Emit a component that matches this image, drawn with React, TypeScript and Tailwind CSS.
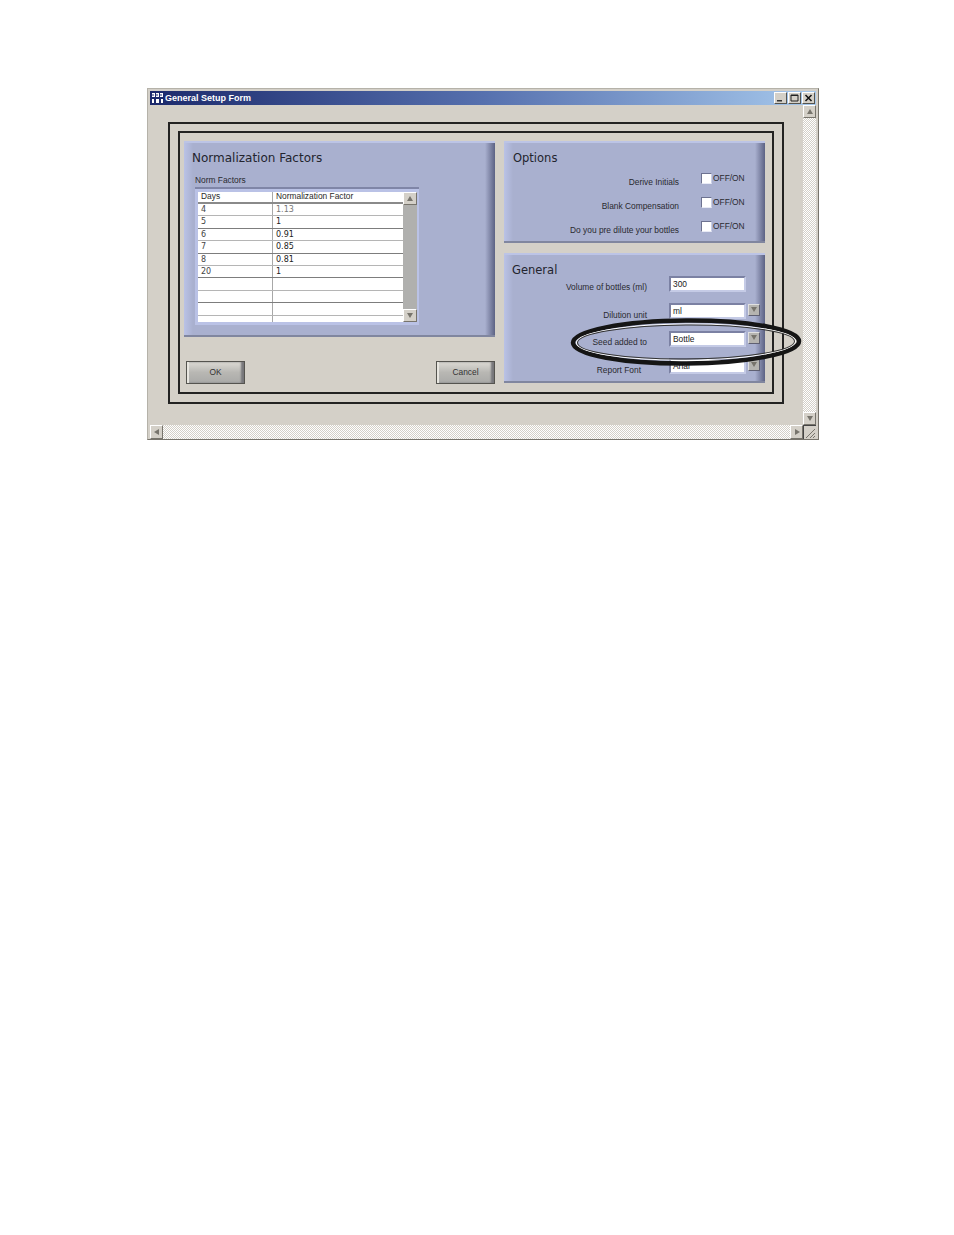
import React from "react";

const UI = "font-['Liberation_Sans',sans-serif]";

const Tri = ({ dir, className = "" }: { dir: "up" | "down" | "left" | "right"; className?: string }) => {
  const pts = { up: "4,1 7,6 1,6", down: "1,1 7,1 4,6", left: "6,1 6,7 1,4", right: "2,1 2,7 7,4" }[dir];
  return (
    <svg width="8" height="8" viewBox="0 0 8 8" className={className}>
      <polygon points={pts} fill="#77746c" />
    </svg>
  );
};

const WinBtn = ({ dir, className = "" }: { dir: "up" | "down" | "left" | "right"; className?: string }) => (
  <div className={`flex items-center justify-center bg-[#d4d0c8] border border-t-white border-l-white border-r-[#77746c] border-b-[#77746c] ${className}`}>
    <Tri dir={dir} />
  </div>
);

const Panel = ({ className = "", children }: { className?: string; children: React.ReactNode }) => (
  <div
    className={`border-t-2 border-b-2 border-t-[#bcc4e6] border-b-[#80869f] bg-[#a9b0cf] bg-[linear-gradient(to_right,#bac2e6_0,#a9b0cf_9px,#a9b0cf_calc(100%-10px),#5c6284_100%)] ${className}`}
  >
    {children}
  </div>
);

const rows = [
  ["4", "1.13"],
  ["5", "1"],
  ["6", "0.91"],
  ["7", "0.85"],
  ["8", "0.81"],
  ["20", "1"],
  ["", ""],
  ["", ""],
  ["", ""],
  ["", ""],
];

const Check = ({ label }: { label: string }) => (
  <div className="flex items-start h-[24px] pr-[20px] justify-end">
    <span className={`pt-[4px] mr-[22px] text-[8.4px] leading-[12px] text-[#2a2a30] ${UI}`}>{label}</span>
    <span className="w-[11px] h-[11px] mt-[1px] bg-white border border-[#6d7290] border-r-[#c9cee6] border-b-[#e8eaf5]" />
    <span className={`ml-[1px] mt-[1px] w-[32px] text-[8.4px] leading-[11px] text-[#2a2a30] ${UI}`}>OFF/ON</span>
  </div>
);

const Field = ({ label, value, arrow, pad = 22, h = 28, top = 5 }: { label: string; value: string; arrow?: boolean; pad?: number; h?: number; top?: number }) => (
  <div className="flex items-start justify-end" style={{ height: h }}>
    <span className={`text-[8.4px] leading-[12px] text-[#2a2a30] ${UI}`} style={{ marginRight: pad, paddingTop: top }}>
      {label}
    </span>
    <div className={`w-[77px] h-[16px] bg-white border-2 border-t-[#7b81a3] border-l-[#7b81a3] border-r-[#c5cbe6] border-b-[#c5cbe6] pl-[2px] text-[8.4px] leading-[12px] text-[#222] ${UI}`}>
      {value}
    </div>
    <div className="ml-[1px] mr-[5px] w-[13px] h-[13px] flex items-center justify-center">
      {arrow && (
        <div className="w-[12px] h-[12px] flex items-center justify-center bg-[#b5b4b0] border border-[#5f6072] border-t-[#e0e0e0] border-l-[#e0e0e0]">
          <Tri dir="down" />
        </div>
      )}
    </div>
  </div>
);

const Btn = ({ label }: { label: string }) => (
  <div className={`w-[59px] h-[23px] flex items-center justify-center border border-[#55544f] bg-[linear-gradient(to_bottom,#dcdad4,#b8b7b3_50%,#aaaaa8)] shadow-[inset_2px_0_0_#e8e6e0,inset_-3px_0_2px_#77767a] text-[8.4px] text-[#333] ${UI}`}>
    {label}
  </div>
);

export default function App() {
  return (
    <div className="relative w-[954px] h-[1235px] bg-white overflow-hidden font-['DejaVu_Sans',sans-serif]">
      <div className="pt-[88px] pl-[147px]">
        <div className="w-[672px] h-[352px] flex flex-col bg-[#d4d0c8] border border-[#b5b2a9] border-r-[#77746c] border-b-[#77746c] px-[2px] pt-[2px]">
          {/* title bar */}
          <div className="h-[14px] flex items-center justify-between bg-[linear-gradient(to_right,#1c2a6c,#5670ae_50%,#a6c8ec)] pl-[1px] pr-[1px]">
            <div className="flex items-center gap-[1px]">
              <svg width="13" height="12" viewBox="0 0 13 12">
                <rect width="13" height="12" fill="#1c2a6c" />
                <path d="M1 1h3v4H1zM5 1h3v4H5zM9 1h3v4H9zM1 7h2v4H1zM5 7h3v4H5zM10 7h2v4h-2z" fill="#fff" />
                <path d="M2 2v2M6 2v2M10 2v2" stroke="#1c2a6c" />
              </svg>
              <span className={`text-[9px] leading-[14px] font-bold text-white ${UI}`}>General Setup Form</span>
            </div>
            <div className="flex gap-[1px]">
              {["min", "max", "close"].map((k) => (
                <div key={k} className="w-[13px] h-[12px] flex items-center justify-center bg-[#d4d0c8] border border-t-white border-l-white border-r-[#55544f] border-b-[#55544f]">
                  <svg width="9" height="8" viewBox="0 0 9 8">
                    {k === "min" && <rect x="1" y="6" width="5" height="1.5" fill="#333" />}
                    {k === "max" && <path d="M1 1h7v6H1zM1 1.5h7" fill="none" stroke="#222" />}
                    {k === "close" && <path d="M1.5 1l6 6M7.5 1l-6 6" stroke="#111" strokeWidth="1.5" />}
                  </svg>
                </div>
              ))}
            </div>
          </div>

          {/* body */}
          <div className="flex-1 flex flex-col min-h-0">
            <div className="flex-1 flex min-h-0">
              <div className="flex-1 pl-[18px] pr-[19px] pt-[17px] pb-[21px]">
                <div className="h-full border-2 border-[#222] px-[8px] pt-[7px] pb-[8px]">
                  <div className="h-full border-2 border-[#222] flex pl-[4px] pr-[7px] pt-[8px] gap-[9px]">
                    {/* left column */}
                    <div className="w-[311px] flex flex-col">
                      <Panel className="h-[196px] pl-[8px] pt-[8px]">
                        <div className="text-[12px] leading-[14px] text-[#23242e]">Normalization Factors</div>
                        <div className={`ml-[3px] mt-[9px] text-[8.4px] leading-[12px] text-[#2a2a30] ${UI}`}>Norm Factors</div>
                        <div className="ml-[3px] mt-[1px] w-[224px] h-[138px] p-[3px] pr-[2px] border-t-2 border-t-[#7f85a7] bg-[#bac2e6]">
                          <div className="flex h-full">
                            <div className="w-[205px] bg-white overflow-hidden">
                              <div className={`flex h-[12px] border-b-2 border-b-[#8a8a8a] text-[8.4px] leading-[9px] text-[#2a2a2a] ${UI}`}>
                                <div className="w-[75px] pl-[3px] border-r border-r-[#a8a8a8]">Days</div>
                                <div className="flex-1 pl-[3px]">Normalization Factor</div>
                              </div>
                              {rows.map((r, i) => (
                                <div key={i} className={`flex h-[12.4px] border-b ${i % 2 ? "border-b-[#7d7d7d]" : "border-b-[#b5b5b5]"} text-[8px] leading-[11px]`}>
                                  <div className="w-[75px] pl-[3px] border-r border-r-[#a8a8a8] text-[#444]">{r[0]}</div>
                                  <div className={`flex-1 pl-[3px] ${i === 0 ? "text-[#777]" : "text-[#222]"}`}>{r[1]}</div>
                                </div>
                              ))}
                            </div>
                            <div className="w-[14px] flex flex-col justify-between bg-[#b0b0ae]">
                              <WinBtn dir="up" className="h-[13px]" />
                              <WinBtn dir="down" className="h-[13px]" />
                            </div>
                          </div>
                        </div>
                      </Panel>
                      <div className="mt-[24px] pl-[2px] flex justify-between">
                        <Btn label="OK" />
                        <Btn label="Cancel" />
                      </div>
                    </div>

                    {/* right column */}
                    <div className="w-[261px] flex flex-col gap-[10px]">
                      <Panel className="h-[102px] pt-[8px]">
                        <div className="pl-[9px] text-[11.5px] leading-[14px] text-[#23242e]">Options</div>
                        <div className="mt-[7px]">
                          <Check label="Derive Initials" />
                          <Check label="Blank Compensation" />
                          <Check label="Do you pre dilute your bottles" />
                        </div>
                      </Panel>
                      <Panel className="h-[130px] pt-[8px]">
                        <div className="pl-[8px] text-[11.5px] leading-[14px] font-medium text-[#23242e]">General</div>
                        <div className="mt-[-1px]">
                          <Field label="Volume of bottles (ml)" value="300" h={27} />
                          <Field label="Dilution unit" value="ml" arrow top={6} />
                          <Field label="Seed added to" value="Bottle" arrow h={27} />
                          <Field label="Report Font" value="Arial" arrow pad={28} h={18} top={6} />
                        </div>
                      </Panel>
                    </div>
                  </div>
                </div>
              </div>
              {/* vertical scrollbar */}
              <div className="w-[13px] flex flex-col justify-between bg-[repeating-conic-gradient(#d4d0c8_0_25%,#ffffff_0_50%)] bg-[length:2px_2px]">
                <WinBtn dir="up" className="h-[13px]" />
                <WinBtn dir="down" className="h-[13px]" />
              </div>
            </div>
            {/* horizontal scrollbar */}
            <div className="h-[14px] flex">
              <div className="flex-1 flex justify-between bg-[repeating-conic-gradient(#d4d0c8_0_25%,#ffffff_0_50%)] bg-[length:2px_2px]">
                <WinBtn dir="left" className="w-[13px]" />
                <WinBtn dir="right" className="w-[13px]" />
              </div>
              <div className="w-[13px] flex items-end justify-end border-t border-l border-[#444]">
                <svg width="12" height="12" viewBox="0 0 12 12">
                  <path d="M11 2L2 11M11 6L6 11M11 9L9 11" stroke="#77746c" fill="none" />
                </svg>
              </div>
            </div>
          </div>
        </div>
      </div>

      {/* hand-drawn ellipse marking over the form */}
      <svg className="absolute left-[565px] top-[314px]" width="240" height="58" viewBox="0 0 240 58">
        <g transform="rotate(-0.4 121 28)">
          <ellipse cx="121" cy="28" rx="113" ry="21.5" fill="none" stroke="#151515" strokeWidth="4.5" />
          <ellipse cx="121" cy="28" rx="109.5" ry="18" fill="none" stroke="#ffffff" strokeWidth="1" />
          <ellipse cx="121" cy="28" rx="108.5" ry="17" fill="none" stroke="#333" strokeWidth="1" />
        </g>
      </svg>
    </div>
  );
}
